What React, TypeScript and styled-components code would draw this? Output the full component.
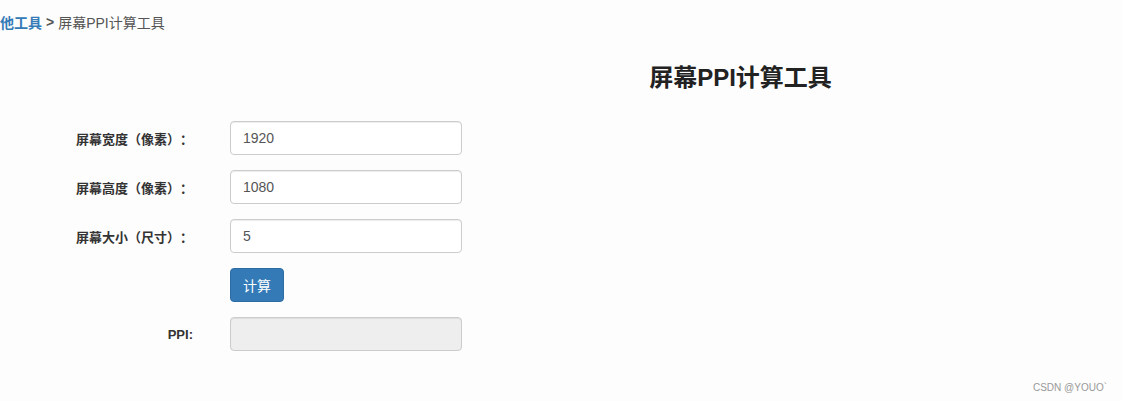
import React from "react";
import styled, { createGlobalStyle } from "styled-components";

const GlobalStyle = createGlobalStyle`
  html, body {
    margin: 0;
    padding: 0;
    background: #fdfdfd;
  }
  body {
    font-family: "Liberation Sans", "Noto Sans CJK SC", sans-serif;
    font-size: 14px;
    color: #333;
    text-spacing-trim: space-all;
  }
`;

const Page = styled.div`
  width: 1123px;
  height: 401px;
  overflow: hidden;
  display: flex;
  flex-direction: column;
`;

const Breadcrumb = styled.div`
  height: 44px;
  display: flex;
  align-items: center;
  margin-left: -14px;
  font-size: 14px;
  color: #555;
  white-space: nowrap;
`;

const CrumbLink = styled.a`
  color: #337ab7;
  font-weight: bold;
  text-decoration: none;
`;

const Sep = styled.span`
  font-weight: bold;
  margin: 0 4px;
`;

const Title = styled.h3`
  margin: 16px 0 0;
  padding-left: 358px;
  height: 36px;
  line-height: 36px;
  text-align: center;
  font-size: 24px;
  font-weight: bold;
  color: #222;
`;

const Form = styled.form`
  margin-top: 25px;
  display: flex;
  flex-direction: column;
  gap: 15px;
`;

const Row = styled.div`
  display: flex;
  align-items: center;
`;

const Label = styled.label`
  width: 230px;
  padding-right: 37px;
  box-sizing: border-box;
  text-align: right;
  font-size: 13px;
  font-weight: bold;
  color: #333;
  white-space: nowrap;
`;

const Field = styled.input<{ $disabled?: boolean }>`
  width: 232px;
  height: 34px;
  box-sizing: border-box;
  padding: 6px 12px;
  font-family: "Liberation Sans", "Noto Sans CJK SC", sans-serif;
  font-size: 14px;
  color: #555;
  border: 1px solid #ccc;
  border-radius: 4px;
  background: ${({ $disabled }) => ($disabled ? "#eee" : "#fff")};
  box-shadow: inset 0 1px 1px rgba(0, 0, 0, 0.075);
  outline: none;
`;

const Button = styled.button`
  height: 34px;
  padding: 0 12px;
  font-family: "Liberation Sans", "Noto Sans CJK SC", sans-serif;
  font-size: 14px;
  color: #fff;
  background: #337ab7;
  border: 1px solid #2e6da4;
  border-radius: 4px;
  cursor: pointer;
`;

const Spacer = styled.div`
  width: 230px;
`;

const Watermark = styled.div`
  margin-top: auto;
  align-self: flex-end;
  padding: 0 16px 8px 0;
  font-size: 10px;
  color: #999;
`;

const fields = [
  { label: "屏幕宽度（像素）：", value: "1920" },
  { label: "屏幕高度（像素）：", value: "1080" },
  { label: "屏幕大小（尺寸）：", value: "5" },
];

const App: React.FC = () => {
  return (
    <Page>
      <GlobalStyle />
      <Breadcrumb>
        <CrumbLink href="#">其他工具</CrumbLink>
        <Sep>&gt;</Sep>
        <span>屏幕PPI计算工具</span>
      </Breadcrumb>
      <Title>屏幕PPI计算工具</Title>
      <Form onSubmit={(e) => e.preventDefault()}>
        {fields.map((f) => (
          <Row key={f.label}>
            <Label>{f.label}</Label>
            <Field defaultValue={f.value} />
          </Row>
        ))}
        <Row>
          <Spacer />
          <Button type="button">计算</Button>
        </Row>
        <Row>
          <Label>PPI:</Label>
          <Field $disabled readOnly />
        </Row>
      </Form>
      <Watermark>CSDN @YOUO`</Watermark>
    </Page>
  );
};

export default App;
